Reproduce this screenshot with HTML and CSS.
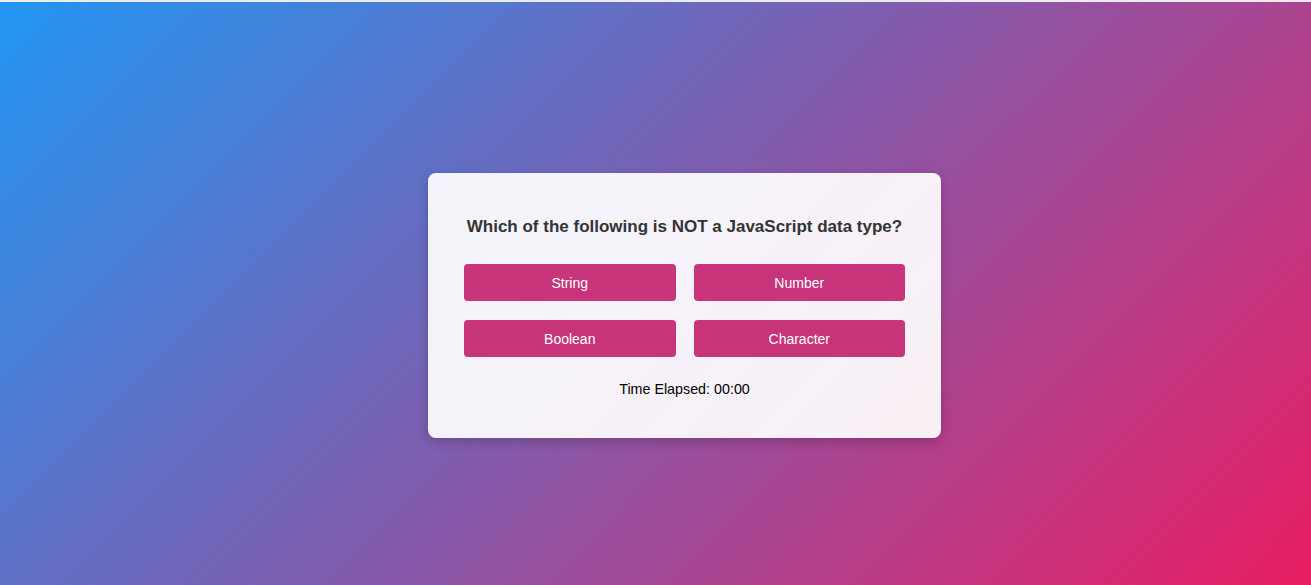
FILE: index.html
```html
<!DOCTYPE html>
<html lang="en">
<head>
<meta charset="utf-8">
<title>Quiz</title>
<link rel="stylesheet" href="styles.css">
</head>
<body>
<div class="topline"></div>
<main class="stage">
  <section class="card">
    <h2 class="question">Which of the following is NOT a JavaScript data type?</h2>
    <div class="options">
      <button class="option">String</button>
      <button class="option">Number</button>
      <button class="option">Boolean</button>
      <button class="option">Character</button>
    </div>
    <p class="timer">Time Elapsed: 00:00</p>
  </section>
</main>
</body>
</html>
```

FILE: styles.css
```css
html, body {
  margin: 0;
  padding: 0;
  height: 100%;
}
body {
  display: flex;
  flex-direction: column;
  font-family: "Liberation Sans", Arial, sans-serif;
  background: #ffffff;
}
.topline {
  height: 2px;
  background: #ececec;
  flex: none;
}
.stage {
  flex: 1;
  display: flex;
  align-items: center;
  justify-content: center;
  padding: 24px 0 0 58px;
  background: linear-gradient(135deg, #2196f3 0%, #e91e63 100%);
}
.card {
  width: 441px;
  padding: 36px 36px 40px;
  background: rgba(255, 255, 255, 0.92);
  border-radius: 8px;
  box-shadow: 0 4px 12px rgba(0, 0, 0, 0.2);
  text-align: center;
}
.question {
  margin: 7px 0 26px;
  font-size: 17px;
  font-weight: bold;
  color: #333333;
  line-height: 22px;
}
.options {
  display: grid;
  grid-template-columns: 1fr 1fr;
  column-gap: 18px;
  row-gap: 19px;
}
.option {
  height: 37px;
  border: none;
  border-radius: 4px;
  background: #c7347a;
  color: #ffffff;
  font-family: "Liberation Sans", Arial, sans-serif;
  font-size: 14px;
  cursor: pointer;
}
.timer {
  margin: 23px 0 0;
  font-size: 14.3px;
  line-height: 18px;
  color: #000000;
}
```
